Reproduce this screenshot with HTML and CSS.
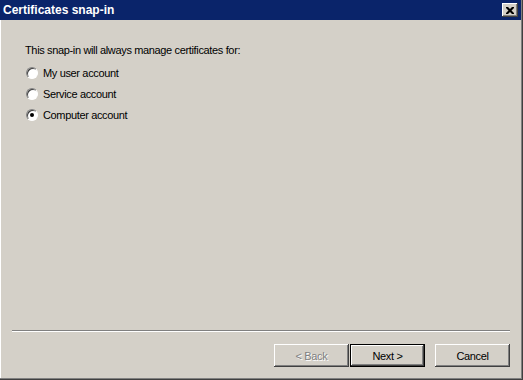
FILE: index.html
```html
<!DOCTYPE html>
<html lang="en">
  <head>
    <meta charset="UTF-8" />
    <title>Certificates snap-in</title>
    <link rel="stylesheet" href="styles.css">
  </head>
  <body>
    <div class="window">
      <div class="titlebar">
        <span class="title">Certificates snap-in</span>
        <span class="close">
          <svg width="8" height="7" viewBox="0 0 8 7">
            <path d="M0 0h2l2 2 2-2h2v1l-2.5 2.5 2.5 2.5v1h-2l-2-2-2 2h-2v-1l2.5-2.5-2.5-2.5z" fill="#000"/>
          </svg>
        </span>
      </div>
      <div class="content">
        <p class="prompt">This snap-in will always manage certificates for:</p>
        <ul class="options">
          <li><span class="radio"></span>My user account</li>
          <li><span class="radio"></span>Service account</li>
          <li><span class="radio checked"></span>Computer account</li>
        </ul>
      </div>
      <div class="footer">
        <div class="sep"></div>
        <div class="buttons">
          <span class="btn disabled">&lt; Back</span>
          <span class="btn default">Next &gt;</span>
          <span class="btn cancel">Cancel</span>
        </div>
      </div>
    </div>
  </body>
</html>
```

FILE: styles.css
```css
* {
  margin: 0;
  padding: 0;
  box-sizing: border-box;
}
body {
  background: #d4d0c8;
  font-family: "Liberation Sans", Arial, sans-serif;
  font-size: 11px;
  letter-spacing: -0.35px;
  color: #000;
}
li {
  list-style: none;
}
.window {
  display: flex;
  flex-direction: column;
  width: 523px;
  height: 380px;
  background: #d4d0c8;
  border-right: 1px solid #404040;
  border-bottom: 1px solid #404040;
  box-shadow: inset -1px -1px 0 #808080, inset 1px 0 0 #ffffff;
}
.titlebar {
  display: flex;
  align-items: center;
  justify-content: space-between;
  height: 20px;
  margin-right: 1px;
  padding: 0 3px 0 3px;
  background: #0a246a;
  color: #fff;
}
.title {
  font-weight: bold;
  font-size: 12px;
  letter-spacing: 0;
}
.close {
  display: flex;
  align-items: center;
  justify-content: center;
  width: 16px;
  height: 14px;
  background: #d4d0c8;
  box-shadow: inset -1px -1px 0 #404040, inset 1px 1px 0 #ffffff, inset -2px -2px 0 #808080;
}

/* radio list */
.content {
  flex: 1;
  padding: 24px 0 0 25px;
}
.prompt {
  line-height: 13px;
  margin-bottom: 5px;
}
.options li {
  display: flex;
  align-items: center;
  height: 21px;
}
.radio {
  width: 12px;
  height: 12px;
  margin: 0 5px 0 1px;
  border-radius: 50%;
  background: #fff;
  border: 1px solid;
  border-color: #808080 #ffffff #ffffff #808080;
  box-shadow: inset 1px 1px 0 #404040;
  display: flex;
  align-items: center;
  justify-content: center;
}
.radio.checked::after {
  content: "";
  width: 4px;
  height: 4px;
  border-radius: 50%;
  background: #000;
}

/* bottom buttons */
.footer {
  padding: 0 12px 12px 12px;
}
.sep {
  height: 2px;
  border-top: 1px solid #808080;
  border-bottom: 1px solid #ffffff;
  margin-bottom: 12px;
}
.buttons {
  display: flex;
  justify-content: flex-end;
}
.btn {
  display: flex;
  align-items: center;
  justify-content: center;
  width: 75px;
  height: 23px;
  background: #d4d0c8;
  box-shadow: inset -1px -1px 0 #404040, inset 1px 1px 0 #ffffff, inset -2px -2px 0 #808080;
}
.btn.disabled {
  color: #808080;
  text-shadow: 1px 1px 0 #fff;
  margin-right: 1px;
}
.btn.default {
  border: 1px solid #000;
}
.btn.cancel {
  margin-left: 10px;
}
```
